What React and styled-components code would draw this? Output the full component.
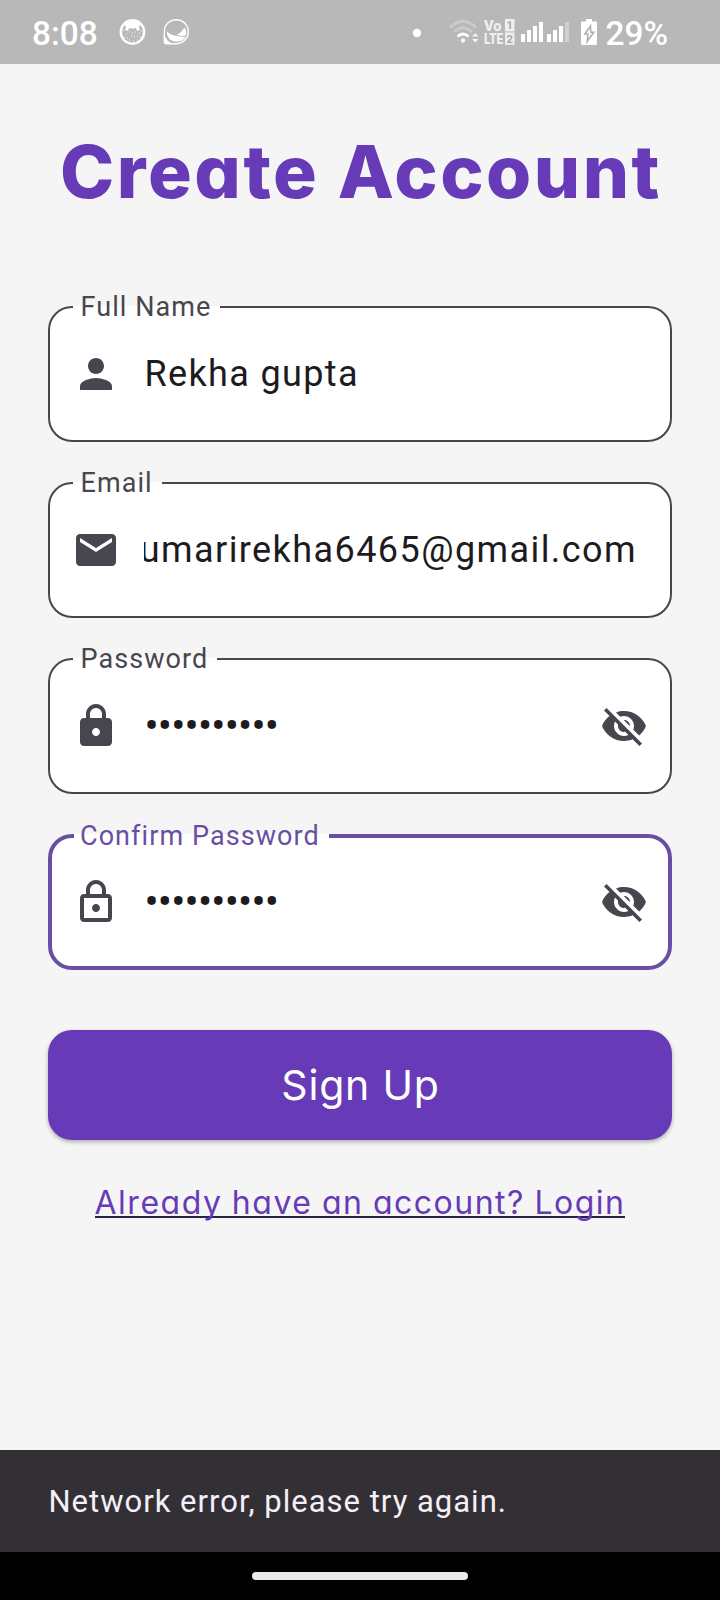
import React from "react";
import styled, { createGlobalStyle } from "styled-components";

const GlobalStyle = createGlobalStyle`
  * { box-sizing: border-box; }
  body { margin: 0; background: #f5f5f5; font-family: Roboto, sans-serif; }
`;

const geometric = `
  font-family: Inter, sans-serif;
  font-feature-settings: "cv11" 1, "ss03" 1;
`;

const Screen = styled.div`
  display: flex;
  flex-direction: column;
  width: 720px;
  height: 1600px;
  overflow: hidden;
  background: #f5f5f5;
`;

const StatusBar = styled.header`
  display: flex;
  align-items: center;
  flex: none;
  height: 64px;
  padding: 2px 52px 0 32px;
  background: #b8b8b8;
  color: #fff;
`;

const StatusText = styled.span`
  margin: 2px 0 0 ${(p) => p.$gap || 0}px;
  font-size: 33.4px;
  font-weight: 500;
  line-height: 40px;
  white-space: nowrap;
`;

const StatusIcon = styled.svg`
  display: block;
  flex: none;
  overflow: visible;
  margin-left: ${(p) => p.$gap || 0}px;
`;

const Spacer = styled.div`
  flex: 1;
`;

const Content = styled.main`
  display: flex;
  flex-direction: column;
  flex: 1;
  padding: 60px 48px 0;
`;

const Title = styled.h1`
  ${geometric}
  margin: 0 0 60px;
  padding-left: 2px;
  height: 108px;
  line-height: 96px;
  font-size: 73px;
  font-weight: 800;
  letter-spacing: 2.5px;
  text-align: center;
  white-space: nowrap;
  color: #673ab7;
`;

const Form = styled.form`
  display: flex;
  flex-direction: column;
  gap: 26px;
`;

const Field = styled.fieldset`
  margin: 0;
  min-width: 0;
  height: 150px;
  padding: 0 ${(p) => (p.$focused ? 20 : 22)}px 0 ${(p) => (p.$focused ? 22 : 23)}px;
  border: ${(p) => (p.$focused ? "4px solid #6750a4" : "2px solid #49454f")};
  border-radius: 24px;
  background: #fff;
`;

const Label = styled.legend`
  padding: 0 9px 0 ${(p) => (p.$focused ? 6 : 7.5)}px;
  height: ${(p) => (p.$focused ? 32 : 30)}px;
  line-height: ${(p) => (p.$focused ? 32 : 30)}px;
  font-size: 27px;
  letter-spacing: 1.07px;
  white-space: nowrap;
  color: ${(p) => (p.$focused ? "#6750a4" : "#49454f")};
`;

const FieldRow = styled.div`
  display: flex;
  align-items: center;
  height: ${(p) => (p.$focused ? 100 : 104)}px;
  margin-left: ${(p) => (p.$focused ? -2 : -1)}px;
`;

const Glyph = styled.svg`
  display: block;
  flex: none;
  width: 48px;
  height: 48px;
  fill: #49454f;
`;

const Value = styled.div`
  display: flex;
  flex: 1;
  justify-content: ${(p) => (p.$scrolled ? "flex-end" : "flex-start")};
  min-width: 0;
  margin: 0 ${(p) => (p.$scrolled ? 11 : 24)}px 0 24px;
  padding-left: ${(p) => (p.$scrolled ? 0 : 0.5)}px;
  overflow: hidden;
  line-height: 48px;
  font-size: 36px;
  letter-spacing: ${(p) => (p.$scrolled ? 1.42 : 1.35)}px;
  white-space: nowrap;
  color: #1d1b20;
`;

const PasswordDots = styled.span`
  font-size: 42px;
  letter-spacing: -0.8px;
`;

const SubmitButton = styled.button`
  ${geometric}
  height: 110px;
  margin: 34px 0 0;
  padding: 0 0 1px 1px;
  border: 0;
  border-radius: 24px;
  background: #673ab7;
  color: #fff;
  font-size: 41px;
  font-weight: 400;
  letter-spacing: 0.8px;
  box-shadow: 0 2px 4px rgba(0, 0, 0, 0.3);
`;

const LoginLink = styled.a`
  ${geometric}
  align-self: center;
  margin-top: 44px;
  height: 34px;
  line-height: 38px;
  font-size: 32px;
  letter-spacing: 1.5px;
  word-spacing: -1px;
  white-space: nowrap;
  color: #673ab7;
  border-bottom: 2px solid #2b2140;
`;

const Snackbar = styled.div`
  display: flex;
  align-items: center;
  flex: none;
  height: 102px;
  padding: 0 48.5px;
  background: #322f35;
  color: #f5eff7;
  font-size: 31px;
  letter-spacing: 1px;
  white-space: nowrap;
`;

const NavBar = styled.footer`
  display: flex;
  justify-content: center;
  flex: none;
  height: 48px;
  padding-top: 20px;
  background: #000;
`;

const NavPill = styled.div`
  width: 216px;
  height: 8px;
  border-radius: 4px;
  background: #ebebeb;
`;

const paths = {
  person:
    "M12 12c2.21 0 4-1.79 4-4s-1.79-4-4-4-4 1.79-4 4 1.79 4 4 4zm0 2c-2.67 0-8 1.34-8 4v2h16v-2c0-2.66-5.33-4-8-4z",
  mail: "M20 4H4c-1.1 0-1.99.9-1.99 2L2 18c0 1.1.9 2 2 2h16c1.1 0 2-.9 2-2V6c0-1.1-.9-2-2-2zm0 4l-8 5-8-5V6l8 5 8-5v2z",
  lock: "M18 8h-1V6c0-2.76-2.24-5-5-5S7 3.24 7 6v2H6c-1.1 0-2 .9-2 2v10c0 1.1.9 2 2 2h12c1.1 0 2-.9 2-2V10c0-1.1-.9-2-2-2zm-6 9c-1.1 0-2-.9-2-2s.9-2 2-2 2 .9 2 2-.9 2-2 2zM9 8V6c0-1.66 1.34-3 3-3s3 1.34 3 3v2H9z",
  lockOutline:
    "M12 17c1.1 0 2-.9 2-2s-.9-2-2-2-2 .9-2 2 .9 2 2 2zm6-9h-1V6c0-2.76-2.24-5-5-5S7 3.24 7 6v2H6c-1.1 0-2 .9-2 2v10c0 1.1.9 2 2 2h12c1.1 0 2-.9 2-2V10c0-1.1-.9-2-2-2zM9 6c0-1.66 1.34-3 3-3s3 1.34 3 3v2H9V6zm9 14H6V10h12v10z",
  eyeOff:
    "M12 7c2.76 0 5 2.24 5 5 0 .65-.13 1.26-.36 1.83l2.92 2.92c1.51-1.26 2.7-2.89 3.43-4.75-1.73-4.39-6-7.5-11-7.5-1.4 0-2.74.25-3.98.7l2.16 2.16C10.74 7.13 11.35 7 12 7zM2 4.27l2.28 2.28.46.46C3.08 8.3 1.78 10.02 1 12c1.73 4.39 6 7.5 11 7.5 1.55 0 3.03-.3 4.38-.84l.42.42L19.73 22 21 20.73 3.27 3 2 4.27zM7.53 9.8l1.55 1.55c-.05.21-.08.43-.08.65 0 1.66 1.34 3 3 3 .22 0 .44-.03.65-.08l1.55 1.55c-.67.33-1.41.53-2.2.53-2.76 0-5-2.24-5-5 0-.79.2-1.53.53-2.2zm4.31-.78l3.15 3.15.02-.16c0-1.66-1.34-3-3-3l-.17.01z",
};

function Icon({ name }) {
  return (
    <Glyph viewBox="0 0 24 24" aria-hidden="true">
      <path d={paths[name]} />
    </Glyph>
  );
}

function TextField({ label, icon, value, focused, secret, scrolled }) {
  return (
    <Field $focused={focused}>
      <Label $focused={focused}>{label}</Label>
      <FieldRow $focused={focused}>
        <Icon name={icon} />
        <Value $scrolled={scrolled}>{secret ? <PasswordDots>{value}</PasswordDots> : value}</Value>
        {secret && <Icon name="eyeOff" />}
      </FieldRow>
    </Field>
  );
}

function PhoneStatus() {
  return (
    <StatusBar>
      <StatusText>8:08</StatusText>
      <StatusIcon $gap={21} width="28" height="28" viewBox="0 0 28 28">
        <circle cx="13.5" cy="13" r="11.7" fill="none" stroke="#fff" strokeWidth="2.4" />
        <path d="M5 4C10 1 17 1 22 4L20 8L21 11L18 12L17 9Q13.5 10 10 9L9 12L6 11L7 8Z" fill="#fff" />
        <path
          d="M4 11.5h1M7 15h1M10 13h1M13 14h1M16 13h1M20 14h1M22 12h1M5 18h1M8 19h1M12 17h1M15 18h1M18 17h1M21 18h1M10 21h1M14 22h1M18 21h1"
          stroke="#fff"
          strokeWidth="1"
        />
      </StatusIcon>
      <StatusIcon $gap={16} width="28" height="28" viewBox="0 0 28 28">
        <path d="M1.3 12.5A12 12 0 1 1 13.5 24.7H3.5Q1.3 24.7 1.3 22.5Z" fill="none" stroke="#fff" strokeWidth="1.4" />
        <path d="M1.5 16Q4 23 10 24.5H3Q1.5 24.5 1.5 23Z" fill="#fff" />
        <path d="M3.5 12Q8 16.5 14 16.8Q18 18.5 23 17.5Q20 22.7 13.3 22.7Q4 22 3.5 12Z" fill="#fff" />
        <path d="M14 15.8Q19 13 21.5 8.5Q24 12 23.3 16Q18 18 14 15.8Z" fill="#fff" />
      </StatusIcon>
      <Spacer />
      <StatusIcon width="10" height="10" viewBox="0 0 10 10">
        <circle cx="5" cy="5" r="4.2" fill="#fff" />
      </StatusIcon>
      <StatusIcon $gap={27} width="32" height="28" viewBox="0 0 32 28">
        <g fill="none" strokeWidth="2.8">
          <path d="M1 8.5Q14 -4 27 8.5" stroke="#cbcbcb" />
          <path d="M5 13Q14 4.5 23 13" stroke="#cbcbcb" />
          <path d="M8.5 17.5Q14 12.5 19.5 17.5" stroke="#fff" />
        </g>
        <circle cx="14" cy="21.5" r="2.2" fill="#f4f4f4" />
        <path d="M23 17.5L26.3 14L29.6 17.5ZM23 20L26.3 23.5L29.6 20Z" fill="#f4f4f4" />
      </StatusIcon>
      <StatusIcon $gap={3.5} width="32" height="28" viewBox="0 0 32 28" fill="#efefef">
        <g fontFamily="Roboto, sans-serif" fontWeight="900" fontSize="15.5">
          <text x="0" y="12.2" textLength="17.5" lengthAdjust="spacingAndGlyphs">Vo</text>
          <text x="0" y="25.2" textLength="19" lengthAdjust="spacingAndGlyphs">LTE</text>
        </g>
        <rect x="21" y="0" width="9.5" height="12.4" />
        <rect x="21" y="13.4" width="9.5" height="12.4" />
        <g fontFamily="Roboto, sans-serif" fontWeight="700" fontSize="11" fill="#a8a8a8" textAnchor="middle">
          <text x="25.6" y="10.2">1</text>
          <text x="25.6" y="23.6">2</text>
        </g>
      </StatusIcon>
      <StatusIcon $gap={5} width="49" height="28" viewBox="0 0 49 28" fill="#fff">
        <path d="M0 15h4v8h-4zM6 11h4v12h-4zM12 7h4v16h-4zM18 3h4v20h-4zM26 15h4v8h-4zM32 11h4v12h-4zM38 7h4v16h-4z" />
        <path d="M44 3h4v20h-4z" fill="#d0d0d0" />
      </StatusIcon>
      <StatusIcon $gap={11} width="17" height="28" viewBox="0 0 17 28">
        <path d="M5 0H11V2.5H15Q16 2.5 16 3.5V25Q16 26 15 26H1Q0 26 0 25V3.5Q0 2.5 1 2.5H5Z" fill="#fff" />
        <path d="M9.5 7L3.8 15H7L6.2 22.5L12.8 13.2H9.7Z" fill="#fff" stroke="#b0b0b0" strokeWidth="1.6" />
      </StatusIcon>
      <StatusText $gap={7}>29%</StatusText>
    </StatusBar>
  );
}

export default function App() {
  const dots = "•".repeat(10);
  return (
    <Screen>
      <GlobalStyle />
      <PhoneStatus />
      <Content>
        <Title>Create Account</Title>
        <Form>
          <TextField label="Full Name" icon="person" value="Rekha gupta" />
          <TextField label="Email" icon="mail" value="kumarirekha6465@gmail.com" scrolled />
          <TextField label="Password" icon="lock" value={dots} secret />
          <TextField label="Confirm Password" icon="lockOutline" value={dots} secret focused />
          <SubmitButton type="button">Sign Up</SubmitButton>
        </Form>
        <LoginLink>Already have an account? Login</LoginLink>
      </Content>
      <Snackbar>Network error, please try again.</Snackbar>
      <NavBar>
        <NavPill />
      </NavBar>
    </Screen>
  );
}
